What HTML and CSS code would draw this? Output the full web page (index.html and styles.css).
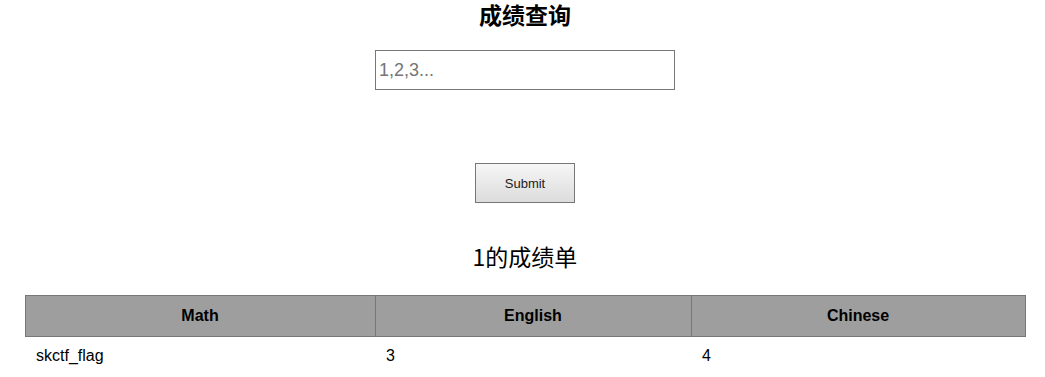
FILE: index.html
```html
<!DOCTYPE html>
<html>
<head>
<meta charset="utf-8">
<link rel="stylesheet" href="styles.css">
</head>
<body>
<div class="page">
  <h1 class="title">成绩查询</h1>
  <form class="query">
    <input class="id-input" type="text" placeholder="1,2,3...">
    <button class="submit" type="button">Submit</button>
  </form>
  <h2 class="subtitle">1的成绩单</h2>
  <table class="scores">
    <colgroup>
      <col class="c1"><col class="c2"><col class="c3">
    </colgroup>
    <thead>
      <tr><th>Math</th><th>English</th><th>Chinese</th></tr>
    </thead>
    <tbody>
      <tr><td>skctf_flag</td><td>3</td><td>4</td></tr>
    </tbody>
  </table>
</div>
</body>
</html>
```

FILE: styles.css
```css
html, body {
  margin: 0;
  padding: 0;
  background: #fff;
}
.page {
  padding-left: 5px;
  font-family: "Liberation Sans", Arial, "Noto Sans CJK SC", sans-serif;
  color: #000;
}
.title {
  margin: 0;
  padding: 0;
  text-align: center;
  font-family: "Noto Sans CJK SC", serif;
  font-size: 23px;
  font-weight: bold;
  line-height: 29px;
}
.query {
  display: flex;
  flex-direction: column;
  align-items: center;
  margin-top: 21px;
  gap: 73px;
}
.id-input {
  box-sizing: border-box;
  width: 300px;
  height: 40px;
  border: 1px solid #777;
  padding: 0 3px;
  font-family: "Liberation Sans", Arial, sans-serif;
  font-size: 18px;
  outline: none;
  margin: 0;
}
.id-input::placeholder {
  color: #757575;
}
.submit {
  box-sizing: border-box;
  width: 100px;
  height: 40px;
  border: 1px solid #777;
  background: linear-gradient(#f6f6f6, #dcdcdc);
  font-family: "Liberation Sans", Arial, sans-serif;
  font-size: 13px;
  color: #222;
  margin: 0;
  padding: 0;
}
.subtitle {
  margin: 37px 0 0;
  text-align: center;
  font-family: "Noto Sans CJK SC", sans-serif;
  font-weight: normal;
  font-size: 23px;
  line-height: 32px;
}
.scores {
  margin: 23px auto 0;
  width: 1000px;
  border-collapse: collapse;
  table-layout: fixed;
  font-size: 16px;
}
.c1 { width: 350px; }
.c2 { width: 316px; }
.c3 { width: 334px; }
.scores th {
  background: #9e9e9e;
  border: 1px solid #777;
  height: 40px;
  padding: 0;
  font-weight: bold;
  text-align: center;
}
.scores td {
  text-align: left;
  padding: 0 10px 0 11px;
  height: 38px;
}
```
